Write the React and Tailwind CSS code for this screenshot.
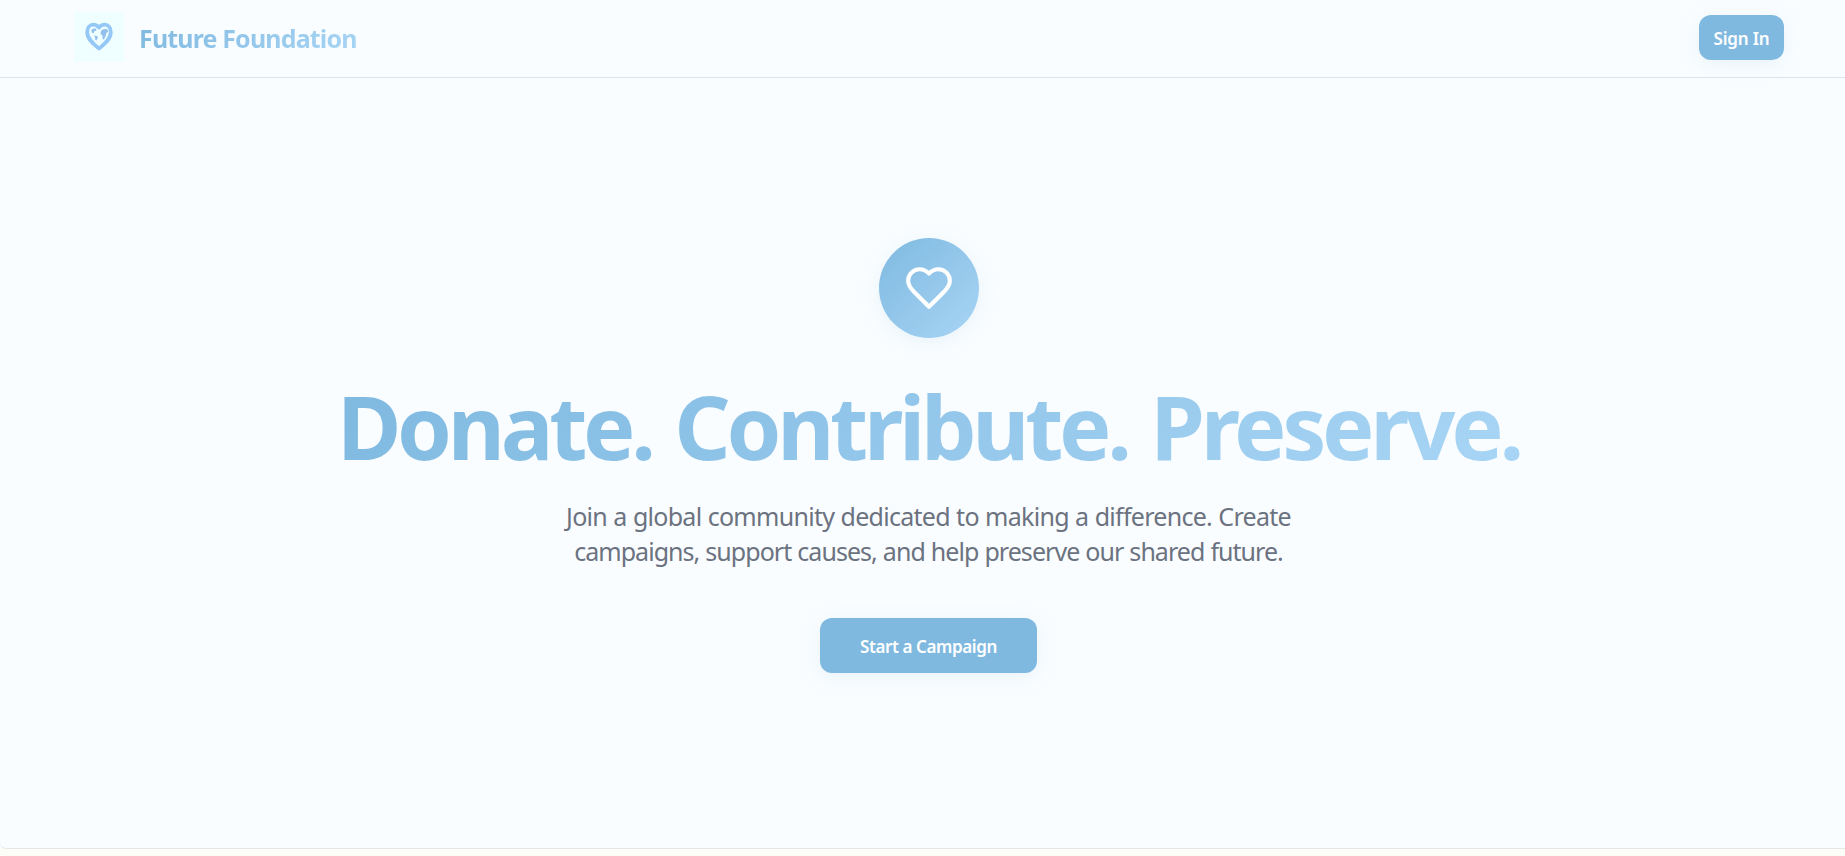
import React from 'react'

function Logo(){
  return (
    <div className="size-[50px] bg-[#efffff]">
      <svg viewBox="0 0 50 50" className="size-full">
        <path d="M25 36.6C18.600 31.400 13.200 26.600 13.200 20.200c0-4.500 2.600-7.500 6.200-7.500 2.600 0 4.400 1.300 5.600 2.800 1.200-1.500 3-2.800 5.600-2.800 3.600 0 6.200 3 6.200 7.500 0 6.400-5.400 11.200-11.800 16.400Z" fill="none" stroke="#95c8f6" strokeWidth="3.8" strokeLinejoin="round"/>
        <path d="M17.400 18c1.200-1.600 3.200-1.900 5-1.200l-.2 1.700-2 1-.7 1.700-1.700-.4ZM20.200 23.400l2.900.6.800 1.500-1.500 2.900-1.100-.3-.2-2.600ZM26.600 20c.6-2 2.800-3.300 5.200-3 1.800.2 2.700 1.600 2.300 3l-1.700.9-.7 2.900-1.700 3.700-1.400-.6-.1-3.500-1.900-1.200Z" fill="#94bfec"/>
      </svg>
    </div>
  )
}

function HeartIcon(){
  return (
    <svg viewBox="0 0 24 24" className="size-[50px]" fill="none" stroke="white" strokeWidth="2" strokeLinecap="round" strokeLinejoin="round">
      <path d="M19 14c1.490-1.460 3-3.210 3-5.500A5.500 5.500 0 0 0 16.500 3c-1.760 0-3 .5-4.500 2-1.500-1.500-2.740-2-4.500-2A5.500 5.500 0 0 0 2 8.500c0 2.300 1.500 4.050 3 5.500l7 7Z"/>
    </svg>
  )
}

export default function App(){
  return (
    <div className="h-screen overflow-hidden flex flex-col bg-[#fdfdf8] font-['Noto_Sans','Open_Sans',sans-serif]">
      <div className="h-[849px] flex flex-col bg-[#fafdff] border-b border-[#e6e8e8] rounded-bl-md">
        <header className="h-[78px] shrink-0 border-b border-[#dde5ec] pl-[74px] pr-[61px] pb-[3px] flex items-center justify-between">
          <div className="flex items-center gap-[15px]">
            <Logo/>
            <span className="mt-[2px] text-[25px] leading-9 font-bold tracking-[-0.85px] text-transparent bg-clip-text bg-linear-135 from-[#7fb9e0] to-[#a8d5f5]">Future Foundation</span>
          </div>
          <button className="w-[85px] h-[45px] pt-[3px] rounded-xl bg-[#7fb9e0] text-white text-[17px] font-semibold tracking-[-0.2px] shadow-[0_4px_20px_rgba(127,185,224,0.15)]">Sign In</button>
        </header>

        <main className="pl-[12px] pt-[160px] flex flex-col items-center text-center">
          <div className="size-[100px] rounded-full flex items-center justify-center bg-linear-135 from-[#7fb9e0] to-[#a8d5f5] shadow-[0_4px_20px_rgba(127,185,224,0.15)]">
            <HeartIcon/>
          </div>
          <h1 className="mt-[35px] text-[88px] leading-[106px] font-bold tracking-[-4.3px] [word-spacing:4px] whitespace-nowrap text-transparent bg-clip-text bg-linear-135 from-[#7fb9e0] to-[#a8d5f5]">Donate. Contribute. Preserve.</h1>
          <p className="mt-[20px] text-[25px] leading-[35px] whitespace-nowrap text-[#6b7280]">
            <span className="tracking-[-0.72px] [word-spacing:0.5px]">Join a global community dedicated to making a difference. Create</span><br/>
            <span className="tracking-[-0.96px] [word-spacing:0.5px]">campaigns, support causes, and help preserve our shared future.</span>
          </p>
          <button className="mt-[49px] w-[217px] h-[55px] pt-[2px] rounded-xl bg-[#7fb9e0] text-white text-[17px] font-semibold tracking-[-0.4px] shadow-[0_4px_20px_rgba(127,185,224,0.15)]">Start a Campaign</button>
        </main>
      </div>
    </div>
  )
}
